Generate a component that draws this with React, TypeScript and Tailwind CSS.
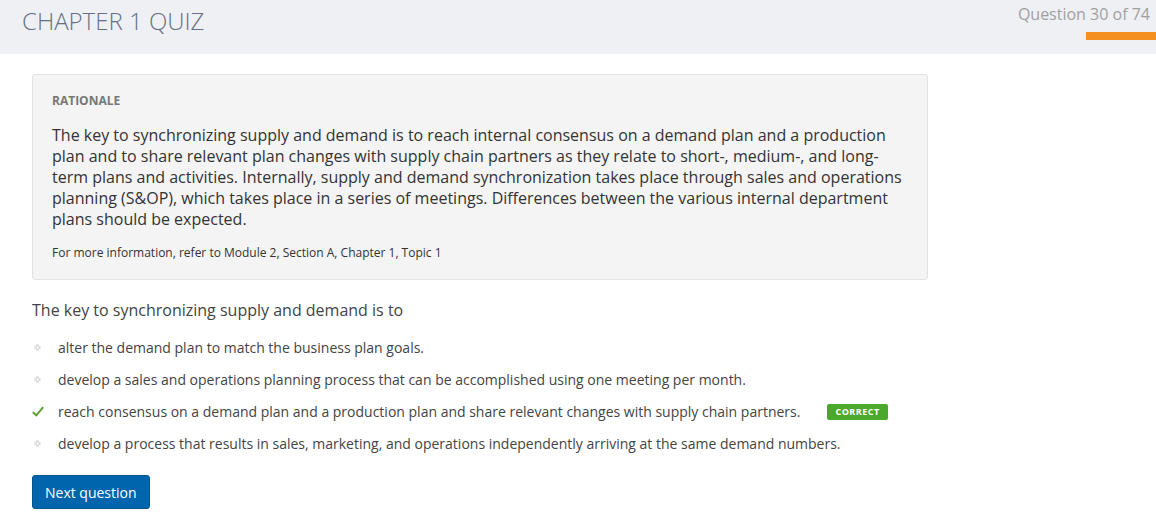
import React from "react";

const options = [
  { text: "alter the demand plan to match the business plan goals.", correct: false },
  { text: "develop a sales and operations planning process that can be accomplished using one meeting per month.", correct: false },
  { text: "reach consensus on a demand plan and a production plan and share relevant changes with supply chain partners.", correct: true },
  { text: "develop a process that results in sales, marketing, and operations independently arriving at the same demand numbers.", correct: false },
];

export default function App() {
  return (
    <div className="w-[1156px] h-[526px] bg-white overflow-hidden" style={{ fontFamily: '"Open Sans", "Liberation Sans", sans-serif' }}>
      <div className="h-[54px] bg-[#eff0f4] flex justify-between">
        <div className="pl-[22px] pt-[5px] text-[24px] font-light leading-[32px] text-[#667085]">CHAPTER 1 QUIZ</div>
        <div className="flex flex-col items-end pt-[4px]">
          <div className="pr-[6px] text-[16px] leading-[20px] text-[#a0a0a0]">Question 30 of 74</div>
          <div className="mt-[8px] w-[70px] h-[8px] bg-[#f39020]" />
        </div>
      </div>
      <div className="pl-[32px] pt-[20px]">
        <div className="w-[896px] bg-[#f4f4f4] border border-[#e2e2e2] rounded-[3px] px-[19px] pt-[17px] pb-[17px]">
          <div className="text-[12px] font-bold leading-[18px] text-[#777777]">RATIONALE</div>
          <p className="mt-[15px] text-[16px] leading-[21px] text-[#333333]">
            The key to synchronizing supply and demand is to reach internal consensus on a demand plan and a production plan and to share relevant plan changes with supply chain partners as they relate to short-, medium-, and long-term plans and activities. Internally, supply and demand synchronization takes place through sales and operations planning (S&amp;OP), which takes place in a series of meetings. Differences between the various internal department plans should be expected.
          </p>
          <div className="mt-[14px] text-[12px] leading-[18px] text-[#333333]">For more information, refer to Module 2, Section A, Chapter 1, Topic 1</div>
        </div>
        <div className="mt-[19px] text-[16px] leading-[22px] text-[#444444]">The key to synchronizing supply and demand is to</div>
        <div className="mt-[16px] flex flex-col gap-[11px]">
          {options.map((o, i) => (
            <div key={i} className="flex items-center h-[21px]">
              <div className="w-[26px] flex justify-start">
                {o.correct ? (
                  <svg width="12" height="11" viewBox="0 0 12 11">
                    <path d="M0.8 6.2 L4.3 9.4 L11.2 1.2" fill="none" stroke="#5aa02c" strokeWidth="2" />
                  </svg>
                ) : (
                  <svg width="7" height="7" viewBox="0 0 7 7" className="ml-[2px]">
                    <rect x="2" y="0.5" width="3" height="6" fill="#d8d8d8" />
                    <rect x="0.5" y="2" width="6" height="3" fill="#d8d8d8" />
                    <rect x="2.5" y="2.5" width="2" height="2" fill="#ffffff" />
                  </svg>
                )}
              </div>
              <div className="text-[14px] leading-[21px] text-[#444444]">{o.text}</div>
              {o.correct && (
                <div className="ml-[27px] h-[16px] px-[8px] bg-[#4aa82c] rounded-[2px] text-[9px] font-bold text-white flex items-center tracking-[0.5px]">CORRECT</div>
              )}
            </div>
          ))}
        </div>
        <button className="mt-[21px] h-[34px] px-[12px] bg-[#0065ad] border border-[#00558f] rounded-[3px] text-[14px] text-white">Next question</button>
      </div>
    </div>
  );
}
